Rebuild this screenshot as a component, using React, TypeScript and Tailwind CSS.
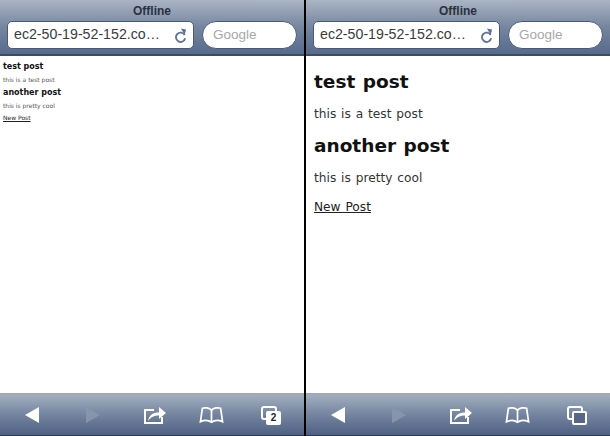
import React from 'react';

function BackIcon() {
    return (
        <svg width="16" height="18" viewBox="0 0 16 18"><path d="M15 1V17L1 9Z" fill="#ffffff" /></svg>
    );
}

function ForwardIcon() {
    return (
        <svg width="16" height="18" viewBox="0 0 16 18"><path d="M1 1V17L15 9Z" fill="#8795ac" /></svg>
    );
}

function ShareIcon() {
    return (
        <svg width="24" height="20" viewBox="0 0 24 20" fill="none">
            <path d="M11 5H2V18H19V12" stroke="#ffffff" strokeWidth="2" />
            <path d="M5 16C6 10 10 7.500 16 7.500V2L23 8L16 14V10.500C11 10.500 8 12 5 16Z" fill="#ffffff" />
        </svg>
    );
}

function BookIcon() {
    return (
        <svg width="25" height="18" viewBox="0 0 26 18" fill="none" stroke="#ffffff" strokeWidth="1.800">
            <path d="M13 4C11 1.500 6 1 3.500 2L1.500 16C5 14.500 10 14.500 13 16.500C16 14.500 21 14.500 24.500 16L22.500 2C20 1 15 1.500 13 4Z" />
            <path d="M13 4V16.500" />
        </svg>
    );
}

function TabsIcon({ count }: { count?: string }) {
    return (
        <div className="relative w-[20px] h-[19px]">
            <div className="absolute left-0 top-0 w-[16px] h-[14px] rounded-[3px] border-2 border-white" />
            {count ? (
                <div className="absolute left-[5px] top-[5px] w-[15px] h-[14px] rounded-[2px] bg-white flex items-center justify-center text-[10px] font-bold text-[#222222] font-['Liberation_Sans',sans-serif]">{count}</div>
            ) : (
                <div className="absolute left-[5px] top-[5px] w-[15px] h-[14px] rounded-[2px] border-2 border-white bg-[#56678a]" />
            )}
        </div>
    );
}

function ReloadIcon() {
    return (
        <svg width="13" height="15" viewBox="0 0 14 16" fill="none">
            <path d="M11.500 6.500A5 5 0 1 0 12 10" stroke="#5f7497" strokeWidth="2" transform="translate(0 1)" />
            <path d="M7.500 0.500L13 1.500L11.500 7.500Z" fill="#5f7497" />
        </svg>
    );
}

function Phone({ tabs, large }: { tabs?: string; large?: boolean }) {
    return (
        <div className="w-[304px] shrink-0 flex flex-col bg-white antialiased">
            <div className="h-[56px] shrink-0 flex flex-col border-b-2 border-[#3d4a60] bg-gradient-to-b from-[#aab4c4] via-[#76869f] to-[#566a8c]">
                <div className="h-[21px] pt-[1px] flex items-center justify-center text-[12px] font-bold text-[#2b3240] font-['Liberation_Sans',sans-serif]">Offline</div>
                <div className="flex gap-[8px] pl-[7px] font-['Liberation_Sans',sans-serif]">
                    <div className="w-[187px] h-[28px] rounded-[5px] bg-white border border-[#4a5a76] flex items-center justify-between pl-[6px] pr-[6px] text-[14.200px] text-[#3c3c3c]">
                        <span>ec2-50-19-52-152.co…</span>
                        <ReloadIcon />
                    </div>
                    <div className="w-[95px] h-[28px] rounded-full bg-white border border-[#4a5a76] flex items-center pl-[10px] text-[13.500px] text-[#a8a8a8]">Google</div>
                </div>
            </div>
            {large ? (
                <div className="flex-1 pl-[8px] pt-[15px] font-['DejaVu_Sans',sans-serif]">
                    <h1 className="text-[18.500px] [word-spacing:1px] leading-[22px] font-bold text-[#111111]">test post</h1>
                    <p className="text-[12.200px] [word-spacing:1px] leading-[16px] mt-[13px] text-[#333333]">this is a test post</p>
                    <h1 className="text-[18.500px] [word-spacing:1px] leading-[22px] font-bold mt-[13px] text-[#111111]">another post</h1>
                    <p className="text-[12.200px] [word-spacing:1px] leading-[16px] mt-[13px] text-[#333333]">this is pretty cool</p>
                    <a className="block w-fit text-[12.200px] [word-spacing:1px] leading-[15px] mt-[14px] underline text-[#222222]">New Post</a>
                </div>
            ) : (
                <div className="flex-1 pl-[3px] pt-[6px] font-['DejaVu_Sans',sans-serif]">
                    <h1 className="text-[8px] leading-[10px] font-bold text-[#111111]">test post</h1>
                    <p className="text-[6px] leading-[8px] mt-[4px] text-[#555555]">this is a test post</p>
                    <h1 className="text-[8px] leading-[10px] font-bold mt-[4px] text-[#111111]">another post</h1>
                    <p className="text-[6px] leading-[8px] mt-[4px] text-[#555555]">this is pretty cool</p>
                    <a className="block w-fit text-[6px] leading-[7px] mt-[4px] underline text-[#222222]">New Post</a>
                </div>
            )}
            <div className="h-[43px] shrink-0 border-t-2 border-b border-t-[#a3a8b2] border-b-[#2f394c] bg-gradient-to-b from-[#a2aec0] via-[#74849f] to-[#4f6184] flex items-center pl-[24px]">
                <BackIcon />
                <div className="ml-[45px]"><ForwardIcon /></div>
                <div className="ml-[42px]"><ShareIcon /></div>
                <div className="ml-[32px]"><BookIcon /></div>
                <div className="ml-[37px]"><TabsIcon count={tabs} /></div>
            </div>
        </div>
    );
}

export default function App() {
    return (
        <div className="w-[610px] h-[436px] flex overflow-hidden bg-black">
            <Phone tabs="2" />
            <div className="w-[2px] shrink-0 bg-black" />
            <Phone large />
        </div>
    );
}
